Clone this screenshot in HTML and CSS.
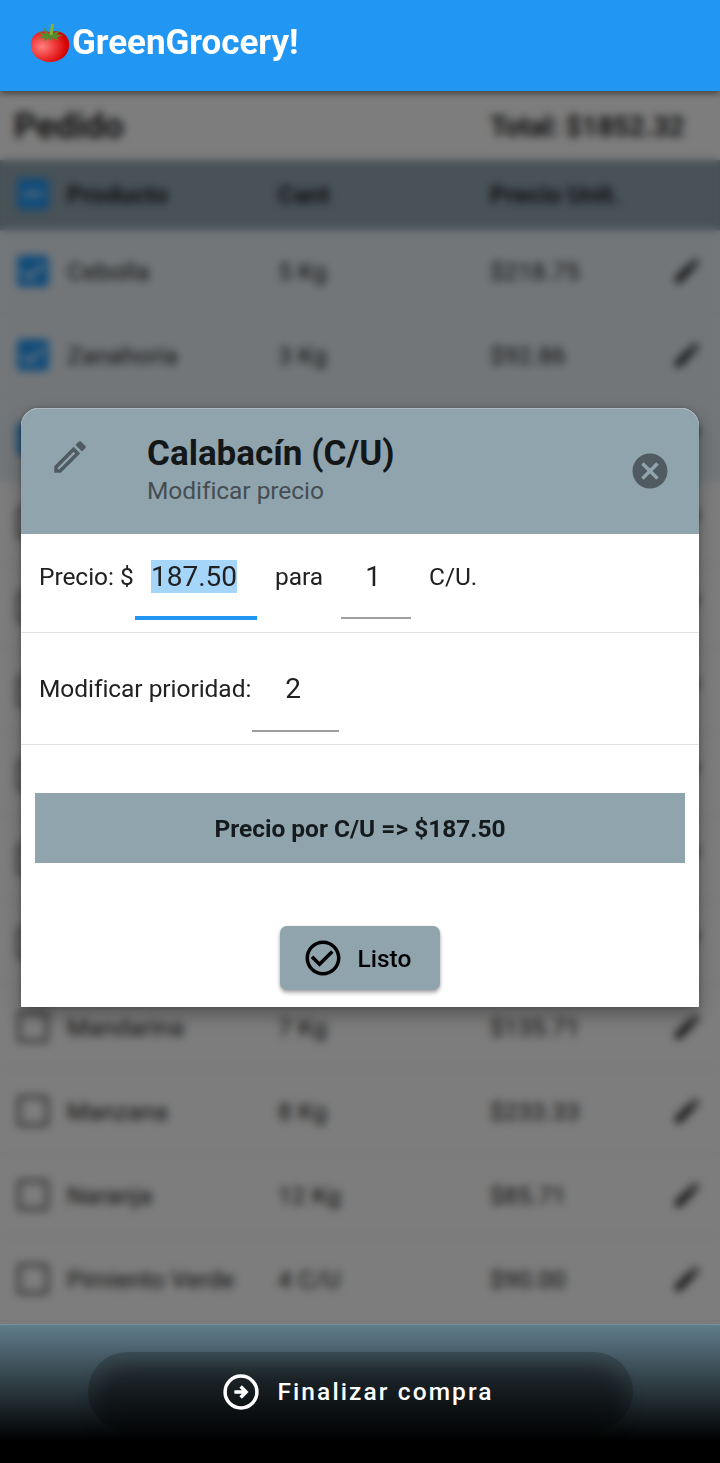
FILE: index.html
```html
<!DOCTYPE html>
<html lang="es">
<head>
<meta charset="utf-8">
<title>GreenGrocery!</title>
<link rel="stylesheet" href="styles.css">
</head>
<body>
<svg class="defs" width="0" height="0" aria-hidden="true">
  <symbol id="pencil" viewBox="0 0 24 24"><path d="M3 17.25V21h3.75L17.81 9.94l-3.75-3.75L3 17.25zM20.71 7.04a1 1 0 0 0 0-1.41l-2.34-2.34a1 1 0 0 0-1.41 0l-1.83 1.83 3.75 3.75 1.83-1.83z"/></symbol>
  <symbol id="checked" viewBox="0 0 24 24"><rect x="3" y="3" width="18" height="18" rx="2" fill="#2196f3"/><path d="M6 12l4 4 8-8" fill="none" stroke="#fff" stroke-width="1.8"/></symbol>
  <symbol id="partial" viewBox="0 0 24 24"><rect x="3" y="3" width="18" height="18" rx="2" fill="#2196f3"/><path d="M7 12h10" stroke="#fff" stroke-width="1.8"/></symbol>
  <symbol id="empty" viewBox="0 0 24 24"><rect x="4" y="4" width="16" height="16" rx="1" fill="none" stroke="#666" stroke-width="2"/></symbol>
</svg>
<div class="screen">
  <header class="appbar">
    <svg class="tomato" viewBox="0 0 40 40">
      <defs><radialGradient id="skin" cx=".3" cy=".5" r=".65"><stop offset="0" stop-color="#ff8080"/><stop offset=".55" stop-color="#ee3535"/><stop offset="1" stop-color="#d50000"/></radialGradient></defs>
      <path d="M20 9C31 6 39.200 12 39.200 21.500c0 11-9 17.500-19.200 17.500S.8 32.500.8 21.500C.8 12 9 6 20 9z" fill="url(#skin)"/>
      <path d="M19 11L13.500 4l2 7L8 8.500l5 4.500-5 2.500 7-.5-1.500 3.500 5-3 2.500 2.500 1.500-3 7 3-3-3.500 7-2.500-7-.5 4-4-6 2z" fill="#558b2f"/>
      <path d="M19.500 12L21 .8h3.200L22.500 12z" fill="#7cb342"/>
    </svg>
    <h1>GreenGrocery!</h1>
  </header>
  <main class="order">
    <div class="summary"><span class="heading">Pedido</span><span class="total">Total: $1852.32</span></div>
    <div class="row head"><svg class="box"><use href="#partial"/></svg><span>Producto</span><span>Cant</span><span>Precio Unit.</span></div>
    <div class="row on"><svg class="box"><use href="#checked"/></svg><span>Cebolla</span><span>5 Kg</span><span>$218.75</span><svg class="edit"><use href="#pencil"/></svg></div>
    <div class="row on"><svg class="box"><use href="#checked"/></svg><span>Zanahoria</span><span>3 Kg</span><span>$92.86</span><svg class="edit"><use href="#pencil"/></svg></div>
    <div class="row on"><svg class="box"><use href="#checked"/></svg><span></span><span></span><span></span><svg class="edit"><use href="#pencil"/></svg></div>
    <div class="row"><svg class="box"><use href="#empty"/></svg><span></span><span></span><span></span><svg class="edit"><use href="#pencil"/></svg></div>
    <div class="row"><svg class="box"><use href="#empty"/></svg><span></span><span></span><span></span><svg class="edit"><use href="#pencil"/></svg></div>
    <div class="row"><svg class="box"><use href="#empty"/></svg><span></span><span></span><span></span><svg class="edit"><use href="#pencil"/></svg></div>
    <div class="row"><svg class="box"><use href="#empty"/></svg><span></span><span></span><span></span><svg class="edit"><use href="#pencil"/></svg></div>
    <div class="row"><svg class="box"><use href="#empty"/></svg><span></span><span></span><span></span><svg class="edit"><use href="#pencil"/></svg></div>
    <div class="row"><svg class="box"><use href="#empty"/></svg><span></span><span></span><span></span><svg class="edit"><use href="#pencil"/></svg></div>
    <div class="row"><svg class="box"><use href="#empty"/></svg><span>Mandarina</span><span>7 Kg</span><span>$135.71</span><svg class="edit"><use href="#pencil"/></svg></div>
    <div class="row"><svg class="box"><use href="#empty"/></svg><span>Manzana</span><span>8 Kg</span><span>$233.33</span><svg class="edit"><use href="#pencil"/></svg></div>
    <div class="row"><svg class="box"><use href="#empty"/></svg><span>Naranja</span><span>12 Kg</span><span>$85.71</span><svg class="edit"><use href="#pencil"/></svg></div>
    <div class="row"><svg class="box"><use href="#empty"/></svg><span>Pimiento Verde</span><span>4 C/U</span><span>$90.00</span><svg class="edit"><use href="#pencil"/></svg></div>
    <div class="scrim"></div>
  </main>
  <footer class="bottom">
    <button class="finish" type="button">
      <svg class="icon" viewBox="0 0 24 24" fill="none" stroke="#fff" stroke-width="2"><circle cx="12" cy="12" r="9.100"/><path d="M8.200 12h6.300M11.800 8.900l3.100 3.100-3.100 3.100"/></svg>
      <span>Finalizar compra</span>
    </button>
  </footer>
</div>

<section class="dialog" role="dialog">
  <header class="dialog-head">
    <svg class="icon lead" viewBox="0 0 24 24"><path d="M14.060 9.020l.92.92L5.920 19H5v-.92l9.060-9.060M17.660 3c-.25 0-.51.1-.7.29l-1.830 1.830 3.750 3.750 1.830-1.830c.39-.39.39-1.020 0-1.410l-2.340-2.340c-.2-.2-.45-.29-.71-.29zm-3.600 3.190L3 17.250V21h3.750L17.810 9.940l-3.750-3.750z"/></svg>
    <div class="titles"><h2>Calabacín (C/U)</h2><p>Modificar precio</p></div>
    <svg class="icon close" viewBox="0 0 24 24"><path d="M12 2C6.470 2 2 6.470 2 12s4.470 10 10 10 10-4.470 10-10S17.530 2 12 2zm5 13.590L15.590 17 12 13.410 8.410 17 7 15.590 10.590 12 7 8.410 8.410 7 12 10.590 15.590 7 17 8.410 13.410 12 17 15.590z"/></svg>
  </header>
  <div class="line price">
    <span class="label-price">Precio: $</span>
    <div class="field active"><span class="selected">187.50</span></div>
    <span class="label-for">para</span>
    <div class="field qty"><span>1</span></div>
    <span class="label-unit">C/U.</span>
  </div>
  <div class="line priority">
    <span class="label-priority">Modificar prioridad:</span>
    <div class="field rank"><span>2</span></div>
  </div>
  <div class="banner">Precio por C/U =&gt; $187.50</div>
  <button class="done" type="button">
    <svg class="icon" viewBox="0 0 24 24"><path d="M16.590 7.580L10 14.170l-3.590-3.580L5 12l5 5 8-8zM12 2C6.480 2 2 6.480 2 12s4.480 10 10 10 10-4.480 10-10S17.520 2 12 2zm0 18c-4.420 0-8-3.580-8-8s3.580-8 8-8 8 3.580 8 8-3.580 8-8 8z"/></svg>
    <span>Listo</span>
  </button>
</section>
</body>
</html>
```
FILE: styles.css
```css
* { box-sizing: border-box; margin: 0; padding: 0; }
body { font-family: Roboto, sans-serif; color: #212121; background: #000; }
button { border: 0; font: inherit; }
.defs { position: absolute; }
.screen { width: 720px; height: 1463px; display: flex; flex-direction: column; overflow: hidden; }
.icon { width: 42px; height: 42px; flex: none; }

.appbar { height: 91px; flex: none; display: flex; align-items: flex-start; padding: 23px 30px 0; background: #2196f3; position: relative; z-index: 2; box-shadow: 0 2px 6px rgba(0,0,0,.4); }
.tomato { width: 40px; height: 40px; }
.appbar h1 { color: #fff; font-size: 35px; line-height: 40px; font-weight: 700; margin-left: 2px; letter-spacing: -.05px; }

.order { height: 1233px; flex: none; position: relative; overflow: hidden; background: #fafafa; }
.summary { height: 69px; display: flex; align-items: center; padding: 1px 0 0 14px; font-weight: 700; }
.heading { width: 476px; font-size: 35px; }
.total { font-size: 28px; letter-spacing: -.25px; }
.row { height: 84px; display: grid; grid-template-columns: 55px 211px 212px 181px 32px; align-items: center; padding-left: 12px; font-size: 24.5px; letter-spacing: .1px; border-bottom: 2px solid #f0f0f0; }
.row.head { height: 70px; padding-bottom: 2px; background: #90a4ae; font-weight: 700; border: 0; }
.row.on { background: #e6edf2; border-color: #e0e6ea; }
.box { width: 42px; height: 42px; }
.edit { width: 32px; height: 32px; fill: #222; }
.scrim { position: absolute; inset: 0; background: rgba(0,0,0,.5); backdrop-filter: blur(4.5px); }

.bottom { height: 139px; flex: none; display: flex; justify-content: center; align-items: flex-start; padding-top: 27px; border-top: 1px solid #78909c; background: linear-gradient(#607d8b, #000 116px); position: relative; z-index: 1; }
.finish { width: 545px; height: 79px; border-radius: 40px; background: rgba(0,0,0,.2); color: #fff; display: flex; align-items: center; justify-content: center; gap: 15px; padding-right: 6px; font-size: 24.5px; font-weight: 500; letter-spacing: 2.1px; position: relative; z-index: 0; }
.finish::before { content: ""; position: absolute; z-index: -1; inset: 14px 8px 0; border-radius: 40px; background: rgba(0,0,0,.35); filter: blur(9px); }

.dialog { position: absolute; left: 21px; top: 408px; width: 678px; height: 599px; background: #fff; border-radius: 18px 18px 0 0; box-shadow: 0 8px 18px rgba(0,0,0,.32), 0 0 5px rgba(0,0,0,.2); z-index: 5; }
.dialog-head { height: 126px; display: flex; align-items: flex-start; padding: 0 28px; background: #90a4ae; border-radius: 18px 18px 0 0; border-top: 1px solid #a9b8bf; }
.dialog-head .icon { fill: #4f5b61; }
.dialog-head .lead { margin-top: 27px; }
.dialog-head .close { margin: 41px 0 0 auto; }
.titles { margin: 24px 0 0 56px; }
.titles h2 { font-size: 35px; line-height: 42px; font-weight: 700; color: #131718; }
.titles p { font-size: 24.5px; line-height: 32px; letter-spacing: -.05px; color: #444e53; }
.line { display: flex; font-size: 24.5px; letter-spacing: -.05px; padding-left: 18px; border-bottom: 1px solid #e0e0e0; white-space: nowrap; }
.price { height: 99px; line-height: 86px; }
.priority { height: 112px; line-height: 112px; }
.label-price { width: 96px; }
.label-for { width: 66px; margin-left: 18px; }
.label-unit { margin-left: 18px; }
.label-priority { width: 213px; }
.field { font-size: 28px; letter-spacing: 0; text-align: center; border-bottom: 2px solid #9e9e9e; }
.active { width: 122px; height: 86px; padding-right: 4px; border-bottom: 4px solid #2196f3; }
.qty { width: 70px; height: 85px; padding-right: 6px; }
.rank { width: 87px; height: 99px; padding-right: 5px; }
.selected { background: #a6d5fa; display: inline-block; line-height: 33px; }
.banner { margin: 48px 14px 0; height: 70px; line-height: 72px; background: #90a4ae; text-align: center; font-size: 24.5px; font-weight: 700; color: #151a1c; }
.done { width: 160px; height: 64px; margin: 63px auto 0; display: flex; align-items: center; padding-left: 21.5px; gap: 14px; background: #90a4ae; color: #000; border-radius: 7px; font-size: 24.5px; font-weight: 500; box-shadow: 0 3px 4px rgba(0,0,0,.28), 0 1px 3px rgba(0,0,0,.15); }
```
